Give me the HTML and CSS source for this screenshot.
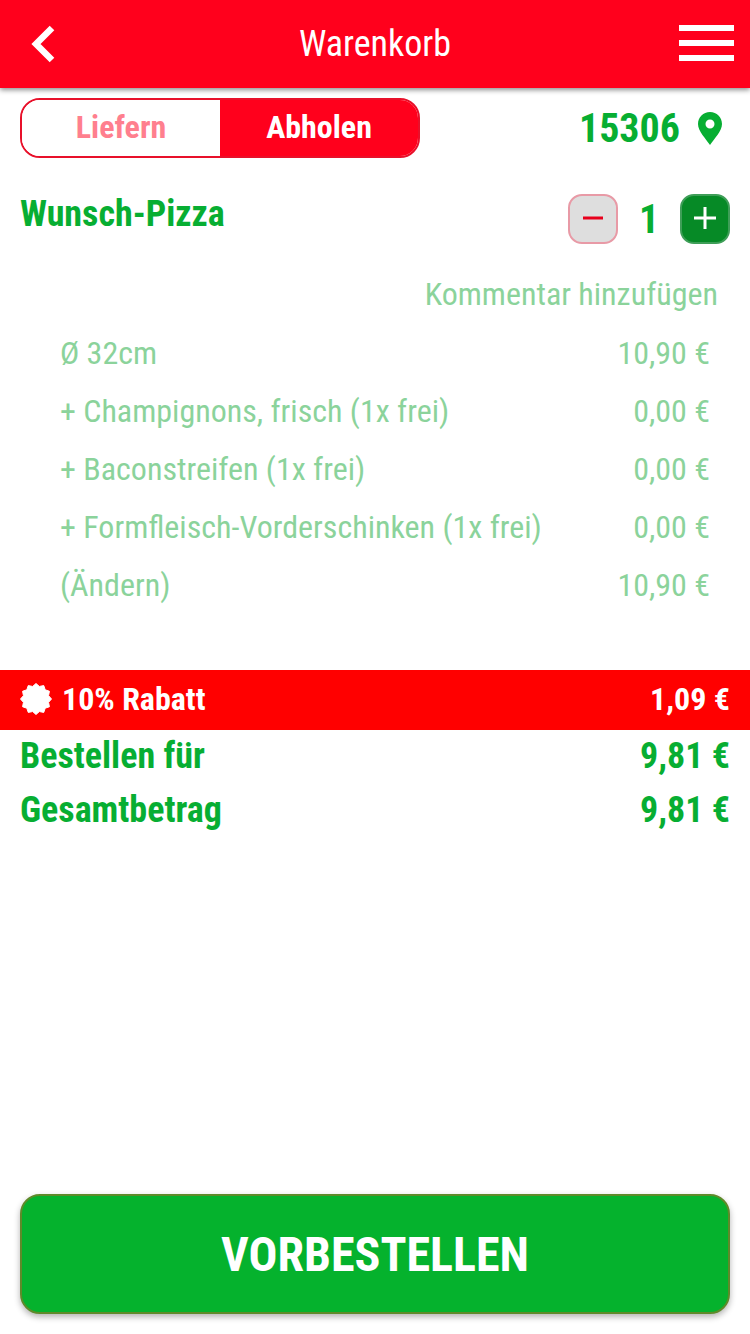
FILE: index.html
```
<!DOCTYPE html>
<html lang="de">
<head>
<meta charset="utf-8">
<title>Warenkorb</title>
<link rel="stylesheet" href="styles.css">
</head>
<body>
<div class="page">
  <header class="topbar">
    <svg class="back" width="26" height="38" viewBox="0 0 26 38"><path d="M22 3 L6 19 L22 35" fill="none" stroke="#fff" stroke-width="6.5"/></svg>
    <h1 class="title">Warenkorb</h1>
    <div class="burger"><span></span><span></span><span></span></div>
  </header>
  <section class="mode">
    <div class="toggle">
      <div class="tab tab-off">Liefern</div>
      <div class="tab tab-on">Abholen</div>
    </div>
    <div class="plz">
      <span>15306</span>
      <svg width="24" height="33" viewBox="0 0 24 33"><path fill-rule="evenodd" d="M12 0C5.2 0 0 5.2 0 12c0 7 8 15 12 21 4-6 12-14 12-21C24 5.2 18.800 0 12 0Zm0 7.500a4.500 4.500 0 1 1 0 9 4.500 4.500 0 0 1 0-9Z" fill="#07ae32"/></svg>
    </div>
  </section>
  <section class="item">
    <div class="item-name">Wunsch-Pizza</div>
    <div class="qty">
      <div class="qbtn minus"><svg width="24" height="24" viewBox="0 0 24 24"><rect x="2" y="9.500" width="20" height="3" fill="#e8001c"/></svg></div>
      <span class="qnum">1</span>
      <div class="qbtn plus"><svg width="24" height="24" viewBox="0 0 24 24"><path d="M12 0V22M1 11H23" stroke="#fff" stroke-width="3"/></svg></div>
    </div>
  </section>
  <div class="comment">Kommentar hinzufügen</div>
  <ul class="lines">
    <li class="line"><span>Ø 32cm</span><span>10,90 €</span></li>
    <li class="line"><span>+ Champignons, frisch (1x frei)</span><span>0,00 €</span></li>
    <li class="line"><span>+ Baconstreifen (1x frei)</span><span>0,00 €</span></li>
    <li class="line"><span>+ Formfleisch-Vorderschinken (1x frei)</span><span>0,00 €</span></li>
    <li class="line"><span>(Ändern)</span><span>10,90 €</span></li>
  </ul>
  <div class="discount">
    <span class="discount-label">
      <svg width="32" height="32" viewBox="-16 -16 32 32"><polygon fill="#fff" stroke="#fff" stroke-width="1" stroke-linejoin="round" points="0,-15.500 3.360,-12.560 7.750,-13.420 9.190,-9.190 13.420,-7.750 12.560,-3.360 15.500,0 12.560,3.360 13.420,7.750 9.190,9.190 7.750,13.420 3.360,12.560 0,15.500 -3.360,12.560 -7.750,13.420 -9.190,9.190 -13.420,7.750 -12.560,3.360 -15.500,0 -12.560,-3.360 -13.420,-7.750 -9.190,-9.190 -7.750,-13.420 -3.360,-12.560"/></svg>
      10% Rabatt
    </span>
    <span>1,09 €</span>
  </div>
  <div class="total"><span>Bestellen für</span><span>9,81 €</span></div>
  <div class="total"><span>Gesamtbetrag</span><span>9,81 €</span></div>
  <div class="spacer"></div>
  <button class="order">VORBESTELLEN</button>
</div>
</body>
</html>
```
FILE: styles.css
```
* { box-sizing: border-box; }
html, body { margin: 0; padding: 0; background: #fff; }
body { font-family: "Roboto Condensed", Roboto, "Liberation Sans", sans-serif; font-stretch: 75%; }
.page { width: 750px; height: 1334px; display: flex; flex-direction: column; overflow: hidden; }
.topbar { height: 88px; flex: none; background: #ff001c; box-shadow: 0 2px 5px rgba(0,0,0,.45); display: grid; grid-template-columns: 1fr auto 1fr; align-items: center; padding: 0 16px 0 30px; }
.back { display: block; }
.title { margin: 0; padding-right: 14px; font-size: 36px; font-weight: 400; color: #fff; }
.burger { justify-self: end; width: 55px; margin-bottom: 2px; display: flex; flex-direction: column; gap: 9px; }
.burger span { display: block; height: 6px; background: #fff; }
.mode { display: flex; justify-content: space-between; align-items: center; padding: 10px 20px 0; }
.toggle { width: 400px; height: 60px; display: flex; border: 2px solid #e8102a; border-radius: 20px; overflow: hidden; }
.tab { flex: 1; display: flex; align-items: center; justify-content: center; padding-bottom: 2px; font-size: 32px; font-weight: 700; }
.tab-off { color: #ff7f8e; background: #fff; }
.tab-on { color: #fff; background: #ff001c; }
.plz { display: flex; align-items: center; gap: 18px; font-size: 40px; font-weight: 700; color: #07ae32; padding-right: 8px; }
.plz svg { display: block; }
.item { display: flex; justify-content: space-between; padding: 36px 20px 0; }
.item-name { font-size: 36px; font-weight: 700; color: #07ae32; line-height: 40px; }
.qty { display: flex; align-items: center; }
.qbtn { width: 50px; height: 50px; border-radius: 14px; display: flex; align-items: center; justify-content: center; border: 2px solid; }
.minus { background: #dedede; border-color: #e89aa6; }
.plus { background: #068a26; border-color: #3f9e58; }
.qnum { width: 62px; text-align: center; font-size: 40px; font-weight: 700; color: #07ae32; }
.comment { padding: 30px 32px 0 0; text-align: right; font-size: 32px; color: #8bd39b; line-height: 40px; }
.lines { list-style: none; margin: 0; padding: 10px 40px 0 60px; color: #8bd39b; font-size: 32px; }
.line { height: 58px; display: flex; justify-content: space-between; align-items: center; }
.discount { margin-top: 56px; height: 60px; flex: none; background: #ff0000; color: #fff; display: flex; justify-content: space-between; align-items: center; padding: 0 20px 2px; font-size: 32px; font-weight: 700; }
.discount-label { display: flex; align-items: center; gap: 10px; }
.total { height: 54px; flex: none; display: flex; justify-content: space-between; align-items: center; padding: 0 20px 2px; font-size: 36px; font-weight: 700; color: #07ae32; }
.spacer { flex: 1; }
.order { flex: none; margin: 0 20px 20px; height: 120px; border: 2px solid #5f8a2a; border-radius: 20px; background: #05b22d; color: #fff; font-family: inherit; font-stretch: inherit; font-size: 48px; font-weight: 700; box-shadow: 0 3px 6px rgba(0,0,0,.3); }
```
